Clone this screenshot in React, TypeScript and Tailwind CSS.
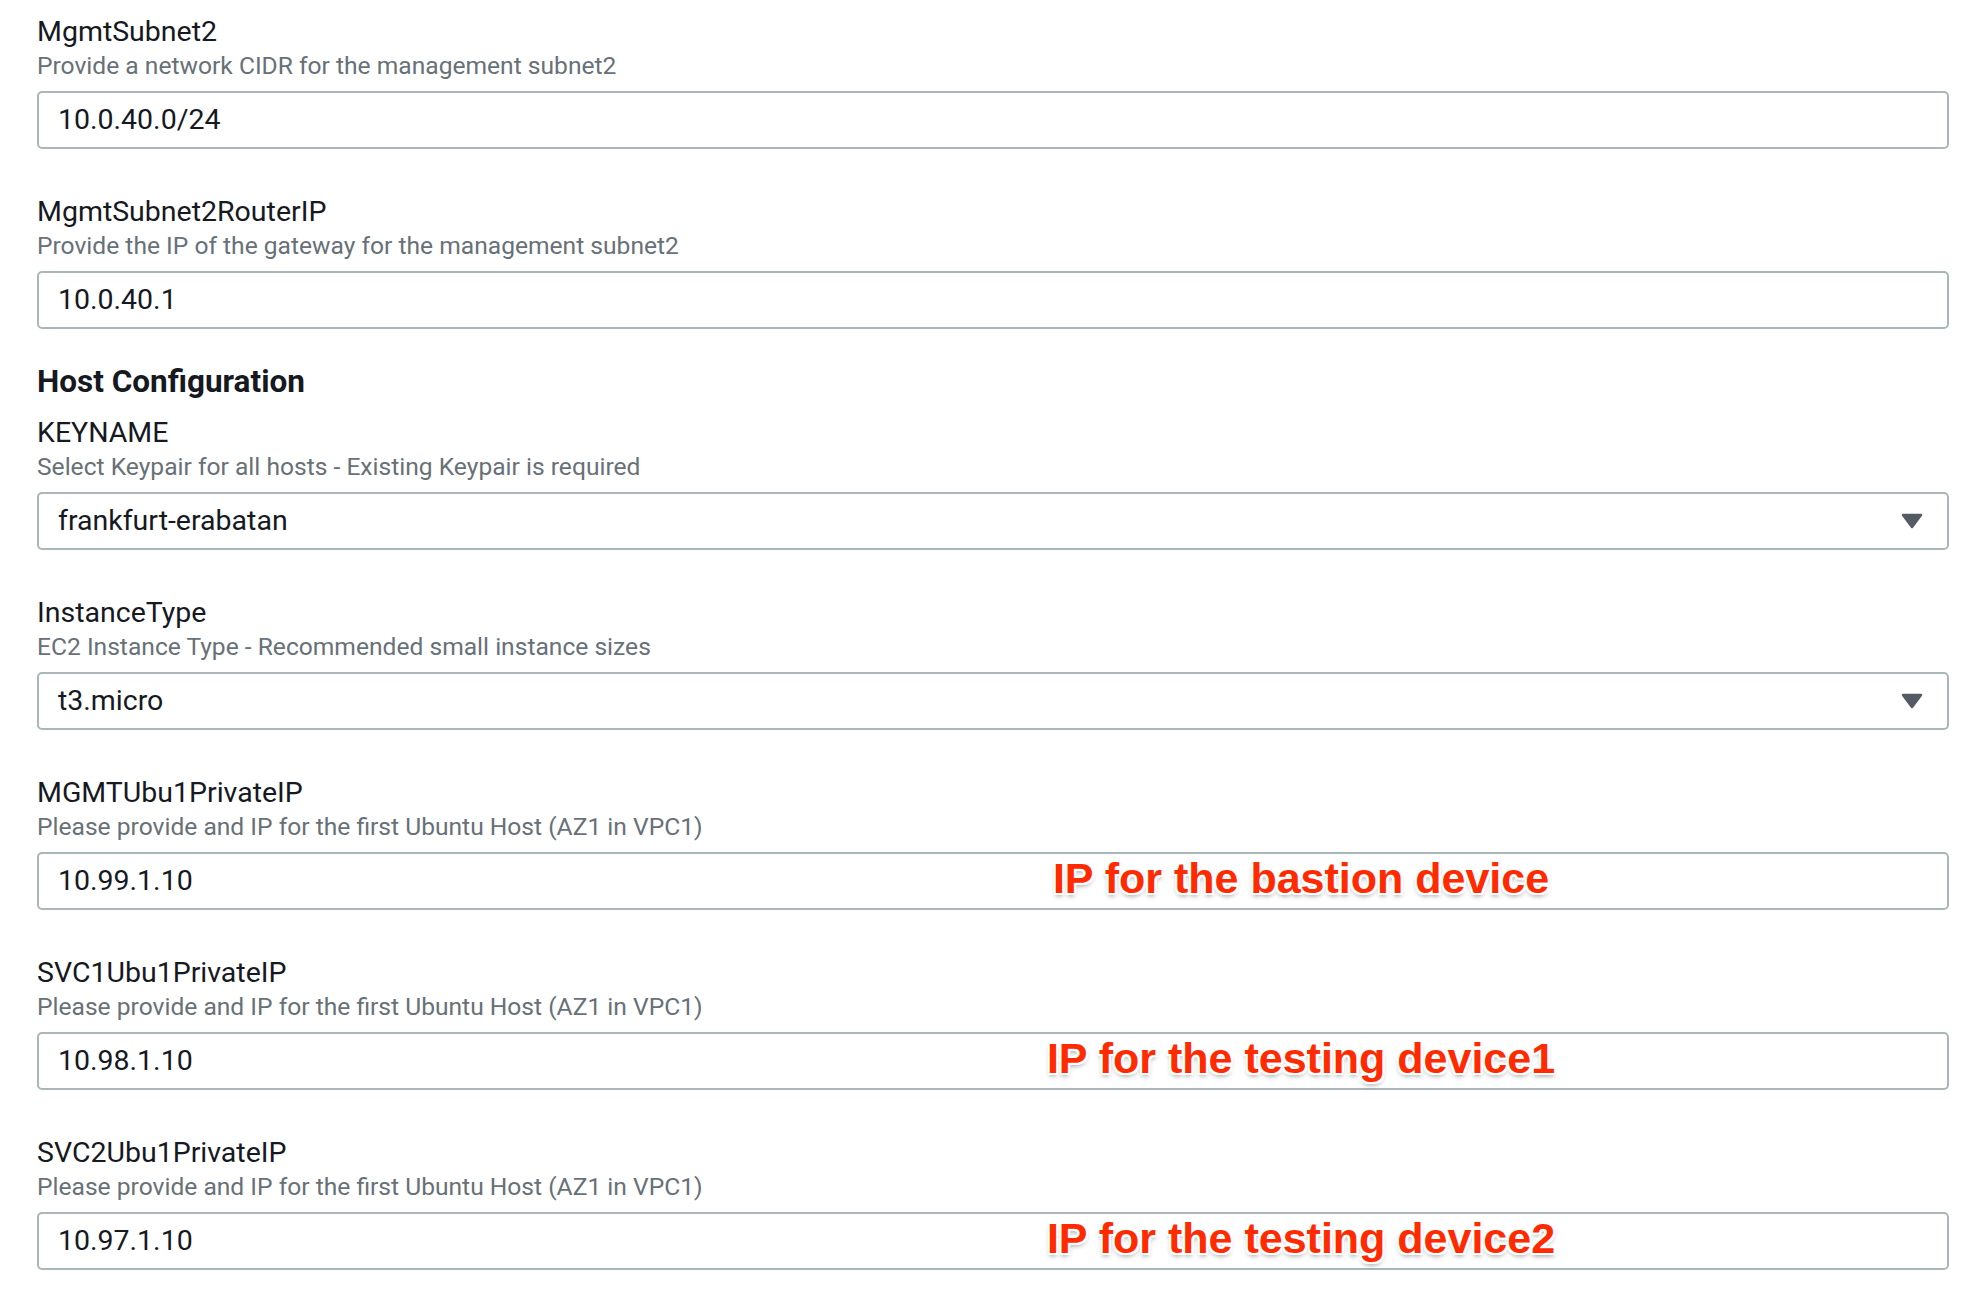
import React from "react";

type FieldProps = {
  label: string;
  desc: string;
  value: string;
  select?: boolean;
  note?: string;
  className?: string;
};

function Caret() {
  return (
    <svg width="22" height="16" viewBox="0 0 22 16" className="shrink-0">
      <polygon
        points="2,2 20,2 11,14"
        fill="#545b64"
        stroke="#545b64"
        strokeWidth="2.5"
        strokeLinejoin="round"
      />
    </svg>
  );
}

function Field({ label, desc, value, select, note, className }: FieldProps) {
  return (
    <div className={"flex flex-col " + (className ?? "")}>
      <div className="h-[36px] text-[28.5px] leading-[39px] text-[#16191f]">{label}</div>
      <div className="text-[24.6px] leading-[36px] text-[#687078]">{desc}</div>
      <div className="relative mt-[7px] flex h-[58px] items-center justify-between rounded-[5px] border-2 border-[#aab7b8] bg-white pl-[19px] pr-[24px]">
        <span className="text-[28.5px] leading-[36px] text-[#16191f]">{value}</span>
        {select ? <Caret /> : null}
        {note ? (
          <span className="absolute left-[1262px] top-[calc(50%-3px)] -translate-x-1/2 -translate-y-1/2 whitespace-nowrap font-['Liberation_Sans','Arial',sans-serif] text-[43px] font-bold leading-none text-[#ff2a00] [text-shadow:-2px_-2px_0_#fff,2px_-2px_0_#fff,-2px_2px_0_#fff,2px_2px_0_#fff,0_-2px_0_#fff,0_2px_0_#fff,-2px_0_0_#fff,2px_0_0_#fff,0_3px_5px_rgba(0,0,0,0.4)]">
            {note}
          </span>
        ) : null}
      </div>
    </div>
  );
}

export default function App() {
  return (
    <div className="min-h-[1298px] w-full bg-white pl-[37px] pr-[39px] pt-[12px] font-['Roboto','Noto_Sans',sans-serif]">
      <Field
        label="MgmtSubnet2"
        desc="Provide a network CIDR for the management subnet2"
        value="10.0.40.0/24"
      />
      <Field
        className="mt-[43px]"
        label="MgmtSubnet2RouterIP"
        desc="Provide the IP of the gateway for the management subnet2"
        value="10.0.40.1"
      />
      <div className="mt-[33px] text-[31.5px] font-bold leading-[40px] text-[#16191f]">
        Host Configuration
      </div>
      <Field
        className="mt-[11px]"
        label="KEYNAME"
        desc="Select Keypair for all hosts - Existing Keypair is required"
        value="frankfurt-erabatan"
        select
      />
      <Field
        className="mt-[43px]"
        label="InstanceType"
        desc="EC2 Instance Type - Recommended small instance sizes"
        value="t3.micro"
        select
      />
      <Field
        className="mt-[43px]"
        label="MGMTUbu1PrivateIP"
        desc="Please provide and IP for the first Ubuntu Host (AZ1 in VPC1)"
        value="10.99.1.10"
        note="IP for the bastion device"
      />
      <Field
        className="mt-[43px]"
        label="SVC1Ubu1PrivateIP"
        desc="Please provide and IP for the first Ubuntu Host (AZ1 in VPC1)"
        value="10.98.1.10"
        note="IP for the testing device1"
      />
      <Field
        className="mt-[43px]"
        label="SVC2Ubu1PrivateIP"
        desc="Please provide and IP for the first Ubuntu Host (AZ1 in VPC1)"
        value="10.97.1.10"
        note="IP for the testing device2"
      />
    </div>
  );
}
